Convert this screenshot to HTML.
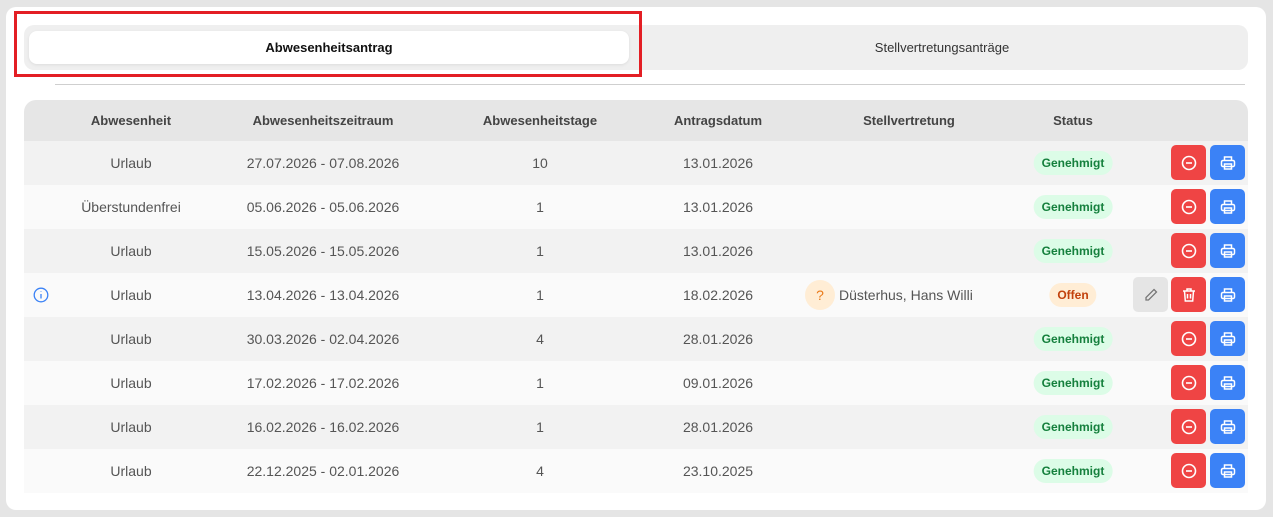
<!DOCTYPE html>
<html><head><meta charset="utf-8"><style>
*{box-sizing:border-box;margin:0;padding:0}
body{width:1273px;height:517px;background:#e5e5e5;font-family:"Liberation Sans",sans-serif;position:relative;overflow:hidden}
.card{position:absolute;left:6px;top:7px;width:1260px;height:503px;background:#fff;border-radius:10px}
.tabs{position:absolute;left:24px;top:25px;width:1224px;height:45px;background:#efefef;border-radius:10px}
.tab{position:absolute;top:6px;height:33px;width:600px;display:flex;align-items:center;justify-content:center;font-size:13px}
.t1{left:5px;background:#fff;border-radius:8px;font-weight:bold;color:#111;box-shadow:0 1px 3px rgba(0,0,0,.08)}
.t2{left:618px;color:#333}
.red{position:absolute;left:14px;top:11px;width:628px;height:66px;border:3px solid #e31e24}
.div{position:absolute;left:55px;top:84px;width:1190px;height:1px;background:#cfcfcf}
.tbl{position:absolute;left:24px;top:100px;width:1224px}
.hd{height:41px;background:#e6e6e6;border-radius:12px 12px 0 0;position:relative;font-weight:bold;font-size:13px;color:#444}
.row{height:44px;position:relative;font-size:14px;color:#555}
.row:nth-child(odd){background:#f2f2f2}
.row:nth-child(even){background:#fafafa}
.c{position:absolute;top:0;height:100%;display:flex;align-items:center;justify-content:center;transform:translateX(-50%);white-space:nowrap}
.badge{font-size:12px;font-weight:bold;padding:5px 8px;border-radius:12px}
.g{background:#dcfce7;color:#15803d}
.o{background:#ffedd5;color:#c2410c}
.btn{position:absolute;top:4px;width:35px;height:35px;border-radius:5px;display:flex;align-items:center;justify-content:center}
.br{left:1147px;background:#ef4444}.bb{left:1186px;background:#3b82f6}.bg{left:1109px;background:#e5e5e5}
</style></head><body>
<div class="card"></div>
<div class="tabs"><div class="tab t1">Abwesenheitsantrag</div><div class="tab t2">Stellvertretungsanträge</div></div>
<div class="red"></div>
<div class="div"></div>
<div class="tbl">
<div class="hd">
<div class="c" style="left:107px">Abwesenheit</div>
<div class="c" style="left:299px">Abwesenheitszeitraum</div>
<div class="c" style="left:516px">Abwesenheitstage</div>
<div class="c" style="left:694px">Antragsdatum</div>
<div class="c" style="left:885px">Stellvertretung</div>
<div class="c" style="left:1049px">Status</div>
</div>
<div id="rows"></div>
</div>
<script>
var d=[["Urlaub","27.07.2026 - 07.08.2026","10","13.01.2026"],["Überstundenfrei","05.06.2026 - 05.06.2026","1","13.01.2026"],["Urlaub","15.05.2026 - 15.05.2026","1","13.01.2026"],["Urlaub","13.04.2026 - 13.04.2026","1","18.02.2026",1],["Urlaub","30.03.2026 - 02.04.2026","4","28.01.2026"],["Urlaub","17.02.2026 - 17.02.2026","1","09.01.2026"],["Urlaub","16.02.2026 - 16.02.2026","1","28.01.2026"],["Urlaub","22.12.2025 - 02.01.2026","4","23.10.2025"]];
var minus='<svg width="16" height="16" viewBox="0 0 16 16" fill="none" stroke="#fff" stroke-width="1.6"><circle cx="8" cy="8" r="6.5"/><path d="M5 8h6"/></svg>';
var prn='<svg width="16" height="16" viewBox="0 0 16 16" fill="none" stroke="#fff" stroke-width="1.5"><path d="M4.5 5.5V2h7v3.5"/><rect x="1.5" y="5.5" width="13" height="6" rx="1.5"/><rect x="4.5" y="9" width="7" height="5"/></svg>';
var trash='<svg width="16" height="16" viewBox="0 0 16 16" fill="none" stroke="#fff" stroke-width="1.5"><path d="M2 4h12M6 4V2h4v2M3.5 4l.8 10h7.4l.8-10M6.5 7v4.5M9.5 7v4.5"/></svg>';
var pen='<svg width="16" height="16" viewBox="0 0 16 16" fill="none" stroke="#777" stroke-width="1.3"><path d="M11 2.5l2.5 2.5-8 8H3v-2.5z"/></svg>';
var h='';
d.forEach(function(r){h+='<div class="row">';
if(r[4])h+='<div class="c" style="left:17px"><svg width="16" height="16" viewBox="0 0 16 16" fill="none" stroke="#3b82f6" stroke-width="1.3"><circle cx="8" cy="8" r="6.8"/><path d="M8 7v4.5M8 4.5v.5"/></svg></div>';
h+='<div class="c" style="left:107px">'+r[0]+'</div><div class="c" style="left:299px">'+r[1]+'</div><div class="c" style="left:516px">'+r[2]+'</div><div class="c" style="left:694px">'+r[3]+'</div>';
if(r[4]){h+='<div class="c" style="left:865px;transform:none"><span style="width:30px;height:30px;border-radius:50%;background:#ffedd5;color:#ea7a1a;display:inline-flex;align-items:center;justify-content:center;margin-left:-84px;margin-right:4px">?</span>Düsterhus, Hans Willi</div>';
h+='<div class="c" style="left:1049px"><span class="badge o">Offen</span></div><div class="btn bg">'+pen+'</div><div class="btn br">'+trash+'</div>';}
else h+='<div class="c" style="left:1049px"><span class="badge g">Genehmigt</span></div><div class="btn br">'+minus+'</div>';
h+='<div class="btn bb">'+prn+'</div></div>';});
document.getElementById('rows').innerHTML=h;
</script>
</body></html>
